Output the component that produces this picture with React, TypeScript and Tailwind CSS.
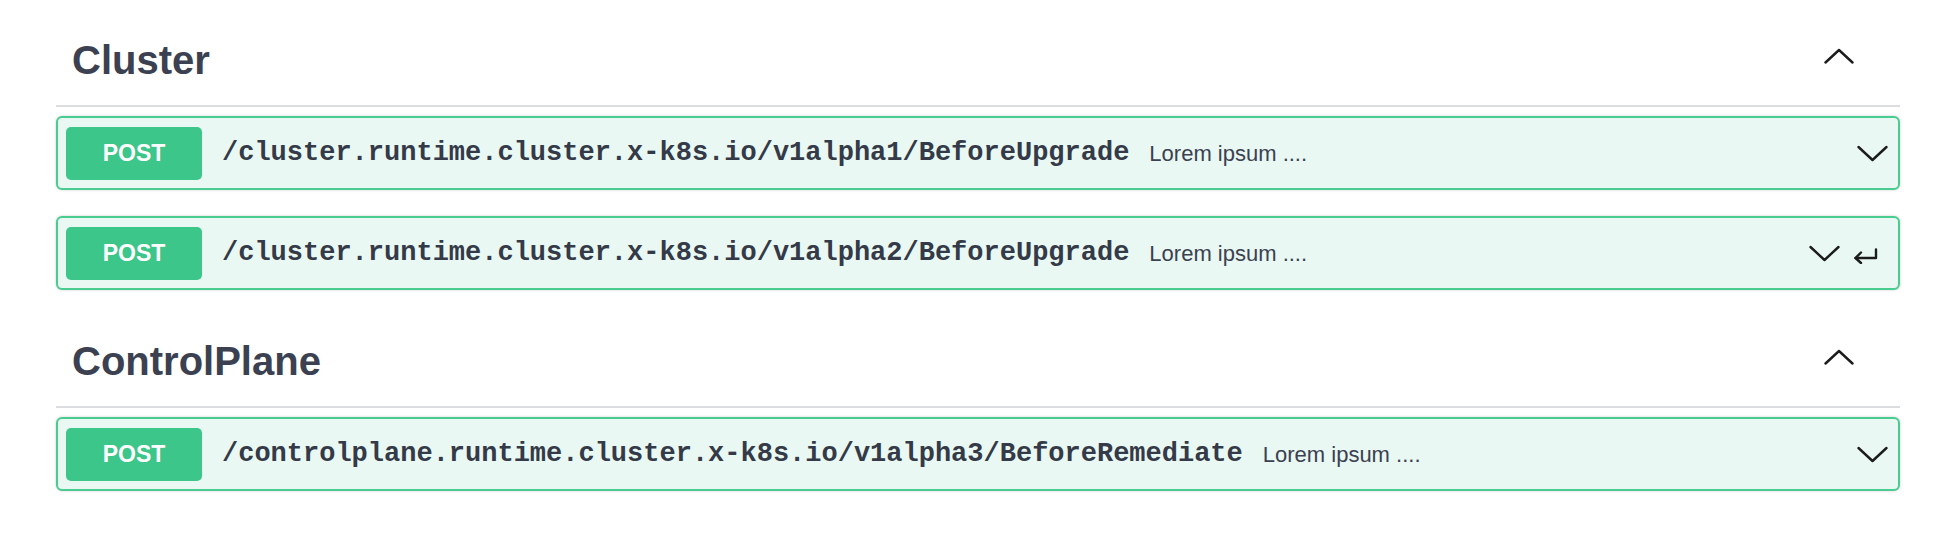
import React from "react";

type Op = { path: string; summary: string; extra?: boolean };

const sections: { name: string; ops: Op[] }[] = [
  {
    name: "Cluster",
    ops: [
      { path: "/cluster.runtime.cluster.x-k8s.io/v1alpha1/BeforeUpgrade", summary: "Lorem ipsum ...." },
      { path: "/cluster.runtime.cluster.x-k8s.io/v1alpha2/BeforeUpgrade", summary: "Lorem ipsum ....", extra: true },
    ],
  },
  {
    name: "ControlPlane",
    ops: [
      { path: "/controlplane.runtime.cluster.x-k8s.io/v1alpha3/BeforeRemediate", summary: "Lorem ipsum ...." },
    ],
  },
];

function ChevronUp() {
  return (
    <svg width="30" height="16" viewBox="0 0 30 16" fill="none" className="mb-[8px]">
      <polyline points="1.5,14.5 15,2 28.5,14.5" stroke="#1c1c1c" strokeWidth="2.4" strokeLinecap="round" strokeLinejoin="round" />
    </svg>
  );
}

function ChevronDown() {
  return (
    <svg width="31" height="17" viewBox="0 0 31 17" fill="none">
      <polyline points="1.5,2 15.5,15 29.5,2" stroke="#1c1c1c" strokeWidth="2.4" strokeLinecap="round" strokeLinejoin="round" />
    </svg>
  );
}

function ReturnArrow() {
  return (
    <svg width="25" height="16" viewBox="0 0 25 16" fill="none" className="mt-[5px]">
      <path d="M23 1.5 V10 H2.5" stroke="#1c1c1c" strokeWidth="2.4" strokeLinecap="round" strokeLinejoin="round" />
      <path d="M8 4.5 L2.5 10 L8 15" stroke="#1c1c1c" strokeWidth="2.4" strokeLinecap="round" strokeLinejoin="round" />
    </svg>
  );
}

function Operation({ op }: { op: Op }) {
  return (
    <div className="flex items-center h-[74px] p-[8px] border-2 border-[#49cc90] bg-[#e9f8f2] rounded-[6px] shadow-[0_0_3px_rgba(0,0,0,0.19)]">
      <div className="flex items-center justify-center w-[136px] h-[53px] rounded-[5px] bg-[#3cc689] text-white text-[23px] font-bold font-['Liberation_Sans',Arial,sans-serif]">
        POST
      </div>
      <span className="ml-[20px] text-[27px] font-bold text-[#343a48] font-['Liberation_Mono','Courier_New',monospace] whitespace-nowrap">
        {op.path}
      </span>
      <span className="ml-[20px] text-[22px] text-[#3b4151] font-['Liberation_Sans',Arial,sans-serif] whitespace-nowrap">
        {op.summary}
      </span>
      {op.extra ? (
        <div className="ml-auto flex items-center gap-[13px] pr-[12px]">
          <ChevronDown />
          <ReturnArrow />
        </div>
      ) : (
        <div className="ml-auto flex items-center pr-[2px]">
          <ChevronDown />
        </div>
      )}
    </div>
  );
}

export default function App() {
  return (
    <div className="w-full min-h-[550px] bg-white pt-[36px] pl-[56px] pr-[60px]">
      <div className="flex flex-col gap-[47px]">
        {sections.map((s) => (
          <section key={s.name}>
            <h3 className="flex items-center justify-between pl-[16px] pr-[46px] pb-[21px] border-b-2 border-[#dcdde0]">
              <span className="text-[40px] leading-[48px] font-bold text-[#3b4151] font-['Liberation_Sans',Arial,sans-serif]">
                {s.name}
              </span>
              <ChevronUp />
            </h3>
            <div className="mt-[9px] flex flex-col gap-[26px]">
              {s.ops.map((op) => (
                <Operation key={op.path} op={op} />
              ))}
            </div>
          </section>
        ))}
      </div>
    </div>
  );
}
